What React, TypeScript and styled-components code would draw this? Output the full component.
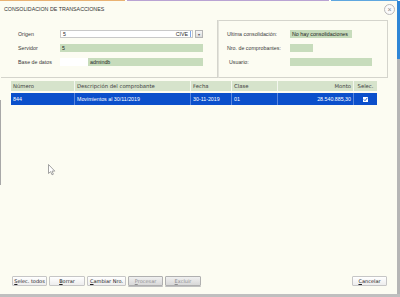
import React from 'react';
import styled, { createGlobalStyle } from 'styled-components';

const GlobalStyle = createGlobalStyle`
    html, body {
        margin: 0;
        padding: 0;
        background: #bfbfbf;
    }

    body {
        width: 400px;
        height: 297px;
        overflow: hidden;
        font-family: "Liberation Sans", Arial, sans-serif;
    }
`;

const Page = styled.div`
    position: relative;
    width: 400px;
    height: 297px;
    display: flex;
    flex-direction: column;
`;

const TopStrip = styled.div`
    height: 1px;
    display: flex;
    gap: 2px;
    background: #ffffff;
`;

const StripSegment = styled.div<{ $color: string; $width: number }>`
    width: ${(p) => p.$width}px;
    background: ${(p) => p.$color};
`;

const Middle = styled.div`
    display: flex;
    height: 293px;
`;

const LeftEdge = styled.div`
    width: 1px;
    background: linear-gradient(#fcfcf2 0, #fcfcf2 99px, #a8a8a8 99px, #a8a8a8 184px, #fcfcf2 184px);
`;

const RightEdge = styled.div`
    width: 3px;
    background: linear-gradient(#2f86d6 0, #2f86d6 58px, #b5b5b5 58px);
`;

const Dialog = styled.div`
    flex: 1;
    background: #fcfcf2;
    display: flex;
    flex-direction: column;
    color: #2a2a2a;
    font-size: 5.3px;
`;

const TitleBar = styled.div`
    height: 16px;
    display: flex;
    align-items: center;
    justify-content: space-between;
    padding: 0 2px 0 3px;
`;

const Title = styled.span`
    font-size: 5.3px;
    color: #333;
`;

const CloseButton = styled.div`
    width: 9px;
    height: 9px;
    border-radius: 50%;
    border: 1px solid #b9b9b9;
    background: #fafafa;
    display: flex;
    align-items: center;
    justify-content: center;
    color: #8a8a8a;
    font-size: 7px;
    line-height: 1;
`;

const TopSection = styled.div`
    display: flex;
    margin-top: 3px;
    height: 58px;
`;

const FormPanel = styled.div<{ $width: number; $labelWidth: number; $padLeft: number; $boxed?: boolean }>`
    box-sizing: border-box;
    width: ${(p) => p.$width}px;
    padding: 10px 0 0 ${(p) => p.$padLeft}px;
    display: grid;
    grid-template-columns: ${(p) => p.$labelWidth}px 1fr;
    grid-auto-rows: 8px;
    row-gap: 6px;
    align-items: center;
    border-bottom: 1px solid #d4d4cc;
    border-right: 1px solid #d4d4cc;
    ${(p) => p.$boxed && `
        border-top: 1px solid #d4d4cc;
        border-left: 1px solid #e4e4dc;
        padding-top: 9px;
    `}
`;

const Label = styled.span<{ $indent?: number }>`
    padding-left: ${(p) => p.$indent ?? 0}px;
    color: #3a3a3a;
`;

const Field = styled.div<{ $width: number; $variant?: 'green' | 'white' }>`
    box-sizing: border-box;
    width: ${(p) => p.$width}px;
    height: 8px;
    display: flex;
    align-items: center;
    padding: 0 2px;
    white-space: nowrap;
    color: #1e1e1e;
    background: ${(p) => (p.$variant === 'white' ? '#ffffff' : '#c7dcbc')};
`;

const Combo = styled.div`
    display: flex;
    width: 143px;
    height: 8px;
`;

const ComboInput = styled.div`
    box-sizing: border-box;
    flex: 1;
    display: flex;
    align-items: center;
    justify-content: space-between;
    padding: 0 1px 0 2px;
    background: #ffffff;
    border: 1px solid #c9c9c9;
`;

const ComboCode = styled.span`
    display: flex;
    align-items: center;
    gap: 2px;
    &::after {
        content: '';
        width: 1px;
        height: 6px;
        background: #7fa9e8;
    }
`;

const ComboButton = styled.div`
    box-sizing: border-box;
    width: 8px;
    margin-left: 2px;
    border: 1px solid #b4b4b4;
    background: linear-gradient(#f6f6f6, #dcdcdc);
    font-size: 4px;
    display: flex;
    align-items: center;
    justify-content: center;
    color: #555;
`;

const SplitField = styled.div`
    display: flex;
    width: 143px;
    height: 8px;
`;

const Table = styled.div`
    margin: 3px 0 0 10px;
    width: 366px;
    display: flex;
    flex-direction: column;
    gap: 2px;
`;

const TableRow = styled.div<{ $selected?: boolean }>`
    display: grid;
    grid-template-columns: 64px 116px 41px 46px 76px 23px;
    height: ${(p) => (p.$selected ? 12 : 10)}px;
    background: ${(p) => (p.$selected ? '#0b4fcb' : '#d6e3cb')};
    color: ${(p) => (p.$selected ? '#ffffff' : '#3c3c3c')};
    font-family: ${(p) => (p.$selected ? 'inherit' : '"DejaVu Sans", Verdana, sans-serif')};
`;

const Cell = styled.div<{ $align?: 'left' | 'right' | 'center'; $selected?: boolean }>`
    display: flex;
    align-items: center;
    justify-content: ${(p) => (p.$align === 'right' ? 'flex-end' : p.$align === 'center' ? 'center' : 'flex-start')};
    padding: 0 2px;
    white-space: nowrap;
    overflow: hidden;
    border-right: 1px solid ${(p) => (p.$selected ? '#5a86dc' : '#f4f7ef')};
    &:last-child {
        border-right: none;
    }
`;

const CheckMark = styled.div`
    width: 5px;
    height: 5px;
    background: #ffffff;
    display: flex;
    align-items: center;
    justify-content: center;
`;

const Spacer = styled.div`
    flex: 1;
`;

const Footer = styled.div`
    display: flex;
    align-items: center;
    gap: 2px;
    padding: 0 10px 8px 11px;
`;

const Button = styled.button<{ $width: number }>`
    box-sizing: border-box;
    width: ${(p) => p.$width}px;
    height: 10px;
    padding: 0;
    font-family: "DejaVu Sans", Verdana, sans-serif;
    font-size: 5px;
    color: #202020;
    border: 1px solid #c6c6c6;
    border-radius: 1px;
    background: linear-gradient(#ffffff, #ededed);
    display: flex;
    align-items: center;
    justify-content: center;

    &:disabled {
        color: #8e8e8e;
        border-color: #b0b0b0;
        background: linear-gradient(#f0f0f0, #d8d8d8);
        box-shadow: 0 1px 0 #c0c0c0;
    }

    u {
        text-decoration-thickness: 0.5px;
    }
`;

const Cursor = styled.svg`
    position: absolute;
    left: 48px;
    top: 164px;
`;

interface Column {
    title: string;
    value: string;
    align?: 'left' | 'right' | 'center';
}

const columns: Column[] = [
    { title: 'Número', value: '844' },
    { title: 'Descripción del comprobante', value: 'Movimientos al 30/11/2019' },
    { title: 'Fecha', value: '30-11-2019' },
    { title: 'Clase', value: '01' },
    { title: 'Monto', value: '28.540.885,30', align: 'right' },
    { title: 'Selec.', value: '', align: 'center' },
];

const buttons = [
    { key: 'S', rest: 'elec. todos', width: 35 },
    { key: 'B', rest: 'orrar', width: 36 },
    { key: 'C', rest: 'ambiar Nro.', width: 39 },
    { key: 'P', rest: 'rocesar', width: 35, disabled: true },
    { key: 'E', rest: 'xcluir', width: 36, disabled: true },
];

const App: React.FC = () => (
    <>
        <GlobalStyle />
        <Page>
            <TopStrip>
                <StripSegment $color="#e9b273" $width={125} />
                <StripSegment $color="#b9a3d3" $width={202} />
                <StripSegment $color="#5fa7df" $width={67} />
            </TopStrip>
            <Middle>
                <LeftEdge />
                <Dialog>
                    <TitleBar>
                        <Title>CONSOLIDACION DE TRANSACCIONES</Title>
                        <CloseButton>×</CloseButton>
                    </TitleBar>

                    <TopSection>
                        <FormPanel $width={217} $labelWidth={42} $padLeft={17}>
                            <Label>Origen</Label>
                            <Combo>
                                <ComboInput>
                                    <span>5</span>
                                    <ComboCode>CIVE</ComboCode>
                                </ComboInput>
                                <ComboButton>▾</ComboButton>
                            </Combo>
                            <Label>Servidor</Label>
                            <Field $width={143}>5</Field>
                            <Label>Base de datos</Label>
                            <SplitField>
                                <Field $width={28} $variant="white" />
                                <Field $width={115}>admindb</Field>
                            </SplitField>
                        </FormPanel>

                        <FormPanel $width={170} $labelWidth={63} $padLeft={8} $boxed>
                            <Label>Ultima consolidación:</Label>
                            <Field $width={62}>No hay consolidaciones</Field>
                            <Label>Nro. de comprobantes:</Label>
                            <Field $width={23} />
                            <Label $indent={2}>Usuario:</Label>
                            <Field $width={82} />
                        </FormPanel>
                    </TopSection>

                    <Table>
                        <TableRow>
                            {columns.map((col) => (
                                <Cell key={col.title} $align={col.align}>{col.title}</Cell>
                            ))}
                        </TableRow>
                        <TableRow $selected>
                            {columns.map((col) => (
                                <Cell key={col.title} $align={col.align} $selected>
                                    {col.title === 'Selec.' ? (
                                        <CheckMark>
                                            <svg width="5" height="5" viewBox="0 0 5 5">
                                                <path d="M0.8 2.4 L2 3.7 L4.4 0.8" fill="none" stroke="#0b4fcb" strokeWidth="0.9" />
                                            </svg>
                                        </CheckMark>
                                    ) : col.value}
                                </Cell>
                            ))}
                        </TableRow>
                    </Table>

                    <Spacer />

                    <Footer>
                        {buttons.map((b) => (
                            <Button key={b.key} $width={b.width} disabled={b.disabled}>
                                <u>{b.key}</u>{b.rest}
                            </Button>
                        ))}
                        <Spacer />
                        <Button $width={35}><u>C</u>ancelar</Button>
                    </Footer>
                </Dialog>
                <RightEdge />
            </Middle>

            <Cursor width="8" height="12" viewBox="0 0 8 12">
                <path d="M0.5 0.5 L0.5 9.5 L2.6 7.6 L4 10.8 L5.4 10.2 L4 7.1 L6.8 7.1 Z" fill="#ffffff" stroke="#8c8c8c" strokeWidth="0.8" />
            </Cursor>
        </Page>
    </>
);

export default App;
